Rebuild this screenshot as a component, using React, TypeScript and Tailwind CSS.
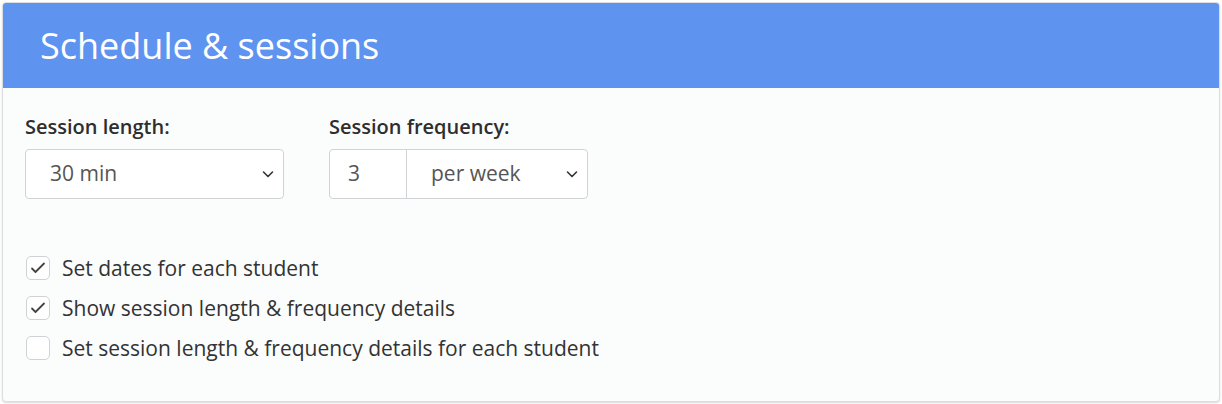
import { useState } from "react";

function Chevron() {
  return (
    <svg width="14" height="14" viewBox="0 0 14 14" fill="none" className="pointer-events-none absolute right-[8px] top-1/2 -translate-y-1/2">
      <path d="M2.5 5l4.5 4.5L11.5 5" stroke="#333" strokeWidth="1.6" strokeLinecap="round" strokeLinejoin="round" />
    </svg>
  );
}

function Check({ checked, label, onToggle }: { checked: boolean; label: string; onToggle: () => void }) {
  return (
    <label className="flex items-center gap-[12px] cursor-pointer" onClick={onToggle}>
      <span className="flex h-[24px] w-[24px] items-center justify-center rounded-[5px] border border-[#cfd3d6] bg-white">
        {checked && (
          <svg width="16" height="16" viewBox="0 0 16 16" fill="none">
            <path d="M2 8.5l3.5 3.5L14 3.5" stroke="#444" strokeWidth="1.8" strokeLinecap="round" strokeLinejoin="round" />
          </svg>
        )}
      </span>
      <span className="text-[21px] leading-[28px] text-[#333]">{label}</span>
    </label>
  );
}

export default function App() {
  const [checks, setChecks] = useState([true, true, false]);
  const labels = [
    "Set dates for each student",
    "Show session length & frequency details",
    "Set session length & frequency details for each student",
  ];

  function toggle(i: number) {
    setChecks((c) => c.map((v, j) => (j === i ? !v : v)));
  }

  return (
    <div className="min-h-screen bg-white p-[2px] font-['Open_Sans',sans-serif]">
      <div className="h-[400px] overflow-hidden rounded-[4px] border border-[#dcdfe2] bg-[#fbfdfd] shadow-[0_1px_2px_rgba(0,0,0,0.15)]">
        <div className="flex h-[85px] items-center bg-[#5f93f0] px-[37px]">
          <h1 className="text-[36px] leading-[44px] text-white">Schedule &amp; sessions</h1>
        </div>
        <div className="px-[22px] pt-[27px]">
          <div className="flex gap-[45px]">
            <div>
              <div className="mb-[10px] text-[20px] font-semibold leading-[24px] text-[#2e2e2e]">Session length:</div>
              <div className="relative h-[50px] w-[259px] rounded-[4px] border border-[#cfd3d6] bg-white">
                <span className="absolute left-[24px] top-1/2 -translate-y-1/2 text-[21px] text-[#555]">30 min</span>
                <Chevron />
              </div>
            </div>
            <div>
              <div className="mb-[10px] text-[20px] font-semibold leading-[24px] text-[#2e2e2e]">Session frequency:</div>
              <div className="flex h-[50px] w-[259px] rounded-[4px] border border-[#cfd3d6] bg-white">
                <div className="flex w-[77px] items-center border-r border-[#cfd3d6] pl-[18px] text-[21px] text-[#555]">3</div>
                <div className="relative flex flex-1 items-center pl-[24px] text-[21px] text-[#555]">
                  per week
                  <Chevron />
                </div>
              </div>
            </div>
          </div>
          <div className="mt-[55px] flex flex-col gap-[12px] pl-[1px]">
            {labels.map((l, i) => (
              <Check key={l} label={l} checked={checks[i]} onToggle={() => toggle(i)} />
            ))}
          </div>
        </div>
      </div>
    </div>
  );
}
